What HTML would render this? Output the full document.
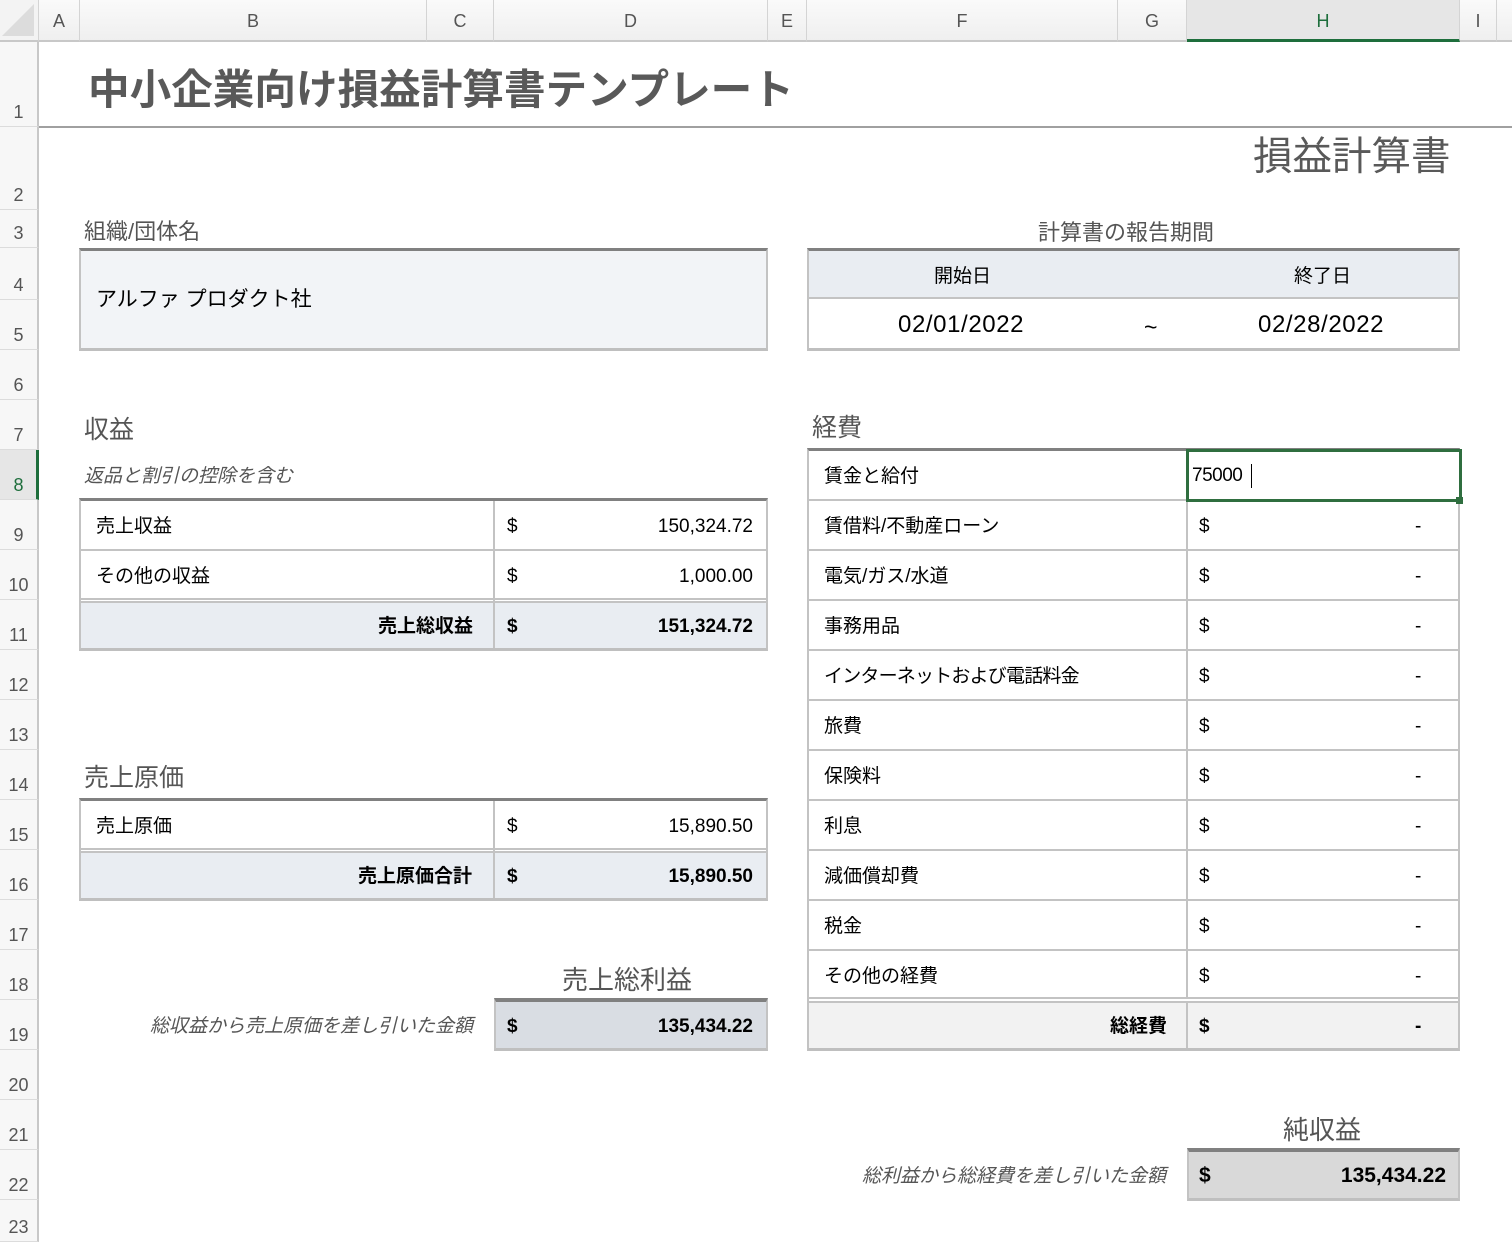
<!DOCTYPE html>
<html><head><meta charset="utf-8">
<style>
*{margin:0;padding:0;box-sizing:border-box}
body{width:1512px;height:1242px;position:relative;background:#fff;font-family:"Liberation Sans","Noto Sans CJK JP",sans-serif;color:#000;overflow:hidden}
.a{position:absolute}
.ch{position:absolute;top:0;height:42px;background:linear-gradient(#fafafa,#efefef);border-right:1px solid #d4d4d4;border-bottom:2px solid #c8c8c8;font-size:18px;color:#555;text-align:center;line-height:42px}
.rh{position:absolute;left:0;width:39px;background:#f7f7f7;border-right:2px solid #c8c8c8;border-bottom:1px solid #dcdcdc;font-size:18px;color:#555;text-align:center}
.rh span{position:absolute;bottom:3px;left:0;width:37px}
.t{position:absolute;font-size:19px;line-height:20px;white-space:nowrap}
.r{position:absolute;font-size:19px;line-height:20px;white-space:nowrap;text-align:right;width:200px}
.h{position:absolute;font-size:25px;color:#555;white-space:nowrap}
.ln{position:absolute;background:#c3c3c3}
.b{font-weight:bold}
.i{font-style:italic;color:#555}
</style></head><body>
<div class="ch" style="left:0;width:39px;background:#f3f3f3"><div class="a" style="right:4px;bottom:4px;width:0;height:0;border-left:32px solid transparent;border-bottom:32px solid #dcdcdc"></div></div>
<div class="ch" style="left:39px;width:41px">A</div>
<div class="ch" style="left:80px;width:347px">B</div>
<div class="ch" style="left:427px;width:67px">C</div>
<div class="ch" style="left:494px;width:274px">D</div>
<div class="ch" style="left:768px;width:39px">E</div>
<div class="ch" style="left:807px;width:311px">F</div>
<div class="ch" style="left:1118px;width:69px">G</div>
<div class="ch" style="left:1187px;width:273px;background:#e6e6e6;color:#1e6e3c;border-bottom:3px solid #1e6e3c">H</div>
<div class="ch" style="left:1460px;width:37px">I</div>
<div class="ch" style="left:1497px;width:15px;border-right:none"></div>
<div class="rh" style="top:42px;height:85px"><span>1</span></div>
<div class="rh" style="top:127px;height:83px"><span>2</span></div>
<div class="rh" style="top:210px;height:38px"><span>3</span></div>
<div class="rh" style="top:248px;height:52px"><span>4</span></div>
<div class="rh" style="top:300px;height:50px"><span>5</span></div>
<div class="rh" style="top:350px;height:50px"><span>6</span></div>
<div class="rh" style="top:400px;height:50px"><span>7</span></div>
<div class="rh" style="top:450px;height:50px;background:#e6e6e6;color:#1e6e3c;border-right:3px solid #1e6e3c"><span>8</span></div>
<div class="rh" style="top:500px;height:50px"><span>9</span></div>
<div class="rh" style="top:550px;height:50px"><span>10</span></div>
<div class="rh" style="top:600px;height:50px"><span>11</span></div>
<div class="rh" style="top:650px;height:50px"><span>12</span></div>
<div class="rh" style="top:700px;height:50px"><span>13</span></div>
<div class="rh" style="top:750px;height:50px"><span>14</span></div>
<div class="rh" style="top:800px;height:50px"><span>15</span></div>
<div class="rh" style="top:850px;height:50px"><span>16</span></div>
<div class="rh" style="top:900px;height:50px"><span>17</span></div>
<div class="rh" style="top:950px;height:50px"><span>18</span></div>
<div class="rh" style="top:1000px;height:50px"><span>19</span></div>
<div class="rh" style="top:1050px;height:50px"><span>20</span></div>
<div class="rh" style="top:1100px;height:50px"><span>21</span></div>
<div class="rh" style="top:1150px;height:50px"><span>22</span></div>
<div class="rh" style="top:1200px;height:42px"><span>23</span></div>

<div class="a b" style="left:88px;top:56px;font-size:41.6px;color:#595959;white-space:nowrap">中小企業向け損益計算書テンプレート</div>
<div class="a" style="left:39px;top:126px;width:1473px;height:2px;background:#a0a0a0"></div>
<div class="a" style="left:1253px;top:125px;font-size:39.5px;color:#595959;white-space:nowrap">損益計算書</div>

<div class="h" style="left:84px;top:214px;font-size:22px">組織/団体名</div>
<div class="a" style="left:79px;top:248px;width:689px;height:103px;background:#f2f4f7;border-top:3px solid #808080;border-bottom:3px solid #bfbfbf;border-left:2px solid #c3c3c3;border-right:2px solid #c3c3c3"></div>
<div class="t" style="left:96px;top:288px;font-size:21px;line-height:24px">アルファ プロダクト社</div>

<div class="h" style="left:1038px;top:215px;font-size:22px">計算書の報告期間</div>
<div class="a" style="left:807px;top:248px;width:653px;height:103px;border-top:3px solid #808080;border-bottom:3px solid #bfbfbf;border-left:2px solid #c3c3c3;border-right:2px solid #c3c3c3"></div>
<div class="a" style="left:809px;top:251px;width:649px;height:48px;background:#e9edf2;border-bottom:2px solid #c3c3c3"></div>
<div class="t" style="left:934px;top:267px">開始日</div>
<div class="t" style="left:1294px;top:267px">終了日</div>
<div class="t" style="left:898px;top:313px;font-size:24px;line-height:24px;letter-spacing:0.6px">02/01/2022</div>
<div class="t" style="left:1144px;top:315px;font-size:23px;line-height:24px">~</div>
<div class="t" style="left:1258px;top:313px;font-size:24px;line-height:24px;letter-spacing:0.6px">02/28/2022</div>

<div class="h" style="left:84px;top:410px">収益</div>
<div class="t i" style="left:84px;top:467px">返品と割引の控除を含む</div>
<div class="a" style="left:79px;top:498px;width:689px;height:153px;border-top:3px solid #808080;border-bottom:3px solid #bfbfbf;border-left:2px solid #c3c3c3;border-right:2px solid #c3c3c3"></div>
<div class="a" style="left:81px;top:602px;width:685px;height:46px;background:#e9edf2"></div>
<div class="ln" style="left:81px;top:549px;width:685px;height:2px"></div>
<div class="ln" style="left:81px;top:598px;width:685px;height:5px;border-top:2px solid #c3c3c3;border-bottom:2px solid #c3c3c3;background:#fff"></div>
<div class="ln" style="left:493px;top:501px;width:2px;height:147px"></div>
<div class="t" style="left:96px;top:517px">売上収益</div><div class="t" style="left:507px;top:517px">$</div><div class="r" style="left:553px;top:517px">150,324.72</div>
<div class="t" style="left:96px;top:567px">その他の収益</div><div class="t" style="left:507px;top:567px">$</div><div class="r" style="left:553px;top:567px">1,000.00</div>
<div class="t b" style="left:378px;top:617px">売上総収益</div><div class="t b" style="left:507px;top:617px">$</div><div class="r b" style="left:553px;top:617px">151,324.72</div>

<div class="h" style="left:84px;top:758px">売上原価</div>
<div class="a" style="left:79px;top:798px;width:689px;height:103px;border-top:3px solid #808080;border-bottom:3px solid #bfbfbf;border-left:2px solid #c3c3c3;border-right:2px solid #c3c3c3"></div>
<div class="a" style="left:81px;top:852px;width:685px;height:46px;background:#e9edf2"></div>
<div class="ln" style="left:81px;top:848px;width:685px;height:5px;border-top:2px solid #c3c3c3;border-bottom:2px solid #c3c3c3;background:#fff"></div>
<div class="ln" style="left:493px;top:801px;width:2px;height:97px"></div>
<div class="t" style="left:96px;top:817px">売上原価</div><div class="t" style="left:507px;top:817px">$</div><div class="r" style="left:553px;top:817px">15,890.50</div>
<div class="t b" style="left:358px;top:867px">売上原価合計</div><div class="t b" style="left:507px;top:867px">$</div><div class="r b" style="left:553px;top:867px">15,890.50</div>

<div class="h" style="left:562px;top:960px;font-size:26px">売上総利益</div>
<div class="t i" style="left:150px;top:1017px">総収益から売上原価を差し引いた金額</div>
<div class="a" style="left:494px;top:998px;width:274px;height:53px;background:#d9dde3;border-top:4px solid #808080;border-bottom:3px solid #bfbfbf;border-left:2px solid #c3c3c3;border-right:2px solid #c3c3c3"></div>
<div class="t b" style="left:507px;top:1017px">$</div><div class="r b" style="left:553px;top:1017px">135,434.22</div>

<div class="h" style="left:812px;top:408px">経費</div>
<div class="a" style="left:807px;top:448px;width:653px;height:603px;border-top:3px solid #808080;border-bottom:3px solid #bfbfbf;border-left:2px solid #c3c3c3;border-right:2px solid #c3c3c3"></div>
<div class="a" style="left:809px;top:1002px;width:649px;height:46px;background:#f2f2f2"></div>
<div class="ln" style="left:1186px;top:451px;width:2px;height:597px"></div>
<div class="ln" style="left:809px;top:499px;width:649px;height:2px"></div>
<div class="ln" style="left:809px;top:549px;width:649px;height:2px"></div>
<div class="ln" style="left:809px;top:599px;width:649px;height:2px"></div>
<div class="ln" style="left:809px;top:649px;width:649px;height:2px"></div>
<div class="ln" style="left:809px;top:699px;width:649px;height:2px"></div>
<div class="ln" style="left:809px;top:749px;width:649px;height:2px"></div>
<div class="ln" style="left:809px;top:799px;width:649px;height:2px"></div>
<div class="ln" style="left:809px;top:849px;width:649px;height:2px"></div>
<div class="ln" style="left:809px;top:899px;width:649px;height:2px"></div>
<div class="ln" style="left:809px;top:949px;width:649px;height:2px"></div>
<div class="ln" style="left:809px;top:997px;width:649px;height:6px;border-top:2px solid #c3c3c3;border-bottom:2px solid #c3c3c3;background:#fff"></div>
<div class="a" style="left:1186px;top:449px;width:276px;height:53px;border:3px solid #2f6e3f;background:#fff"></div>
<div class="a" style="left:1456px;top:497px;width:7px;height:7px;background:#2f6e3f"></div>
<div class="t" style="left:1192px;top:466px;letter-spacing:-0.5px">75000</div>
<div class="a" style="left:1251px;top:464px;width:1px;height:24px;background:#000"></div>

<div class="t" style="left:824px;top:467px">賃金と給付</div>
<div class="t" style="left:824px;top:517px">賃借料/不動産ローン</div>
<div class="t" style="left:824px;top:567px">電気/ガス/水道</div>
<div class="t" style="left:824px;top:617px">事務用品</div>
<div class="t" style="left:824px;top:667px;letter-spacing:-0.8px">インターネットおよび電話料金</div>
<div class="t" style="left:824px;top:717px">旅費</div>
<div class="t" style="left:824px;top:767px">保険料</div>
<div class="t" style="left:824px;top:817px">利息</div>
<div class="t" style="left:824px;top:867px">減価償却費</div>
<div class="t" style="left:824px;top:917px">税金</div>
<div class="t" style="left:824px;top:967px">その他の経費</div>
<div class="t b" style="left:1110px;top:1017px">総経費</div>
<div class="t" style="left:1199px;top:517px">$</div><div class="t" style="left:1415px;top:517px">-</div>
<div class="t" style="left:1199px;top:567px">$</div><div class="t" style="left:1415px;top:567px">-</div>
<div class="t" style="left:1199px;top:617px">$</div><div class="t" style="left:1415px;top:617px">-</div>
<div class="t" style="left:1199px;top:667px">$</div><div class="t" style="left:1415px;top:667px">-</div>
<div class="t" style="left:1199px;top:717px">$</div><div class="t" style="left:1415px;top:717px">-</div>
<div class="t" style="left:1199px;top:767px">$</div><div class="t" style="left:1415px;top:767px">-</div>
<div class="t" style="left:1199px;top:817px">$</div><div class="t" style="left:1415px;top:817px">-</div>
<div class="t" style="left:1199px;top:867px">$</div><div class="t" style="left:1415px;top:867px">-</div>
<div class="t" style="left:1199px;top:917px">$</div><div class="t" style="left:1415px;top:917px">-</div>
<div class="t" style="left:1199px;top:967px">$</div><div class="t" style="left:1415px;top:967px">-</div>
<div class="t b" style="left:1199px;top:1017px">$</div><div class="t b" style="left:1415px;top:1017px">-</div>

<div class="h" style="left:1283px;top:1110px;font-size:26px">純収益</div>
<div class="t i" style="left:862px;top:1167px">総利益から総経費を差し引いた金額</div>
<div class="a" style="left:1187px;top:1148px;width:273px;height:53px;background:#d9d9d9;border-top:4px solid #808080;border-bottom:3px solid #bfbfbf;border-left:2px solid #c3c3c3;border-right:2px solid #c3c3c3"></div>
<div class="t b" style="left:1199px;top:1166px;font-size:21px">$</div><div class="r b" style="left:1246px;top:1166px;font-size:21px">135,434.22</div>
</body></html>
